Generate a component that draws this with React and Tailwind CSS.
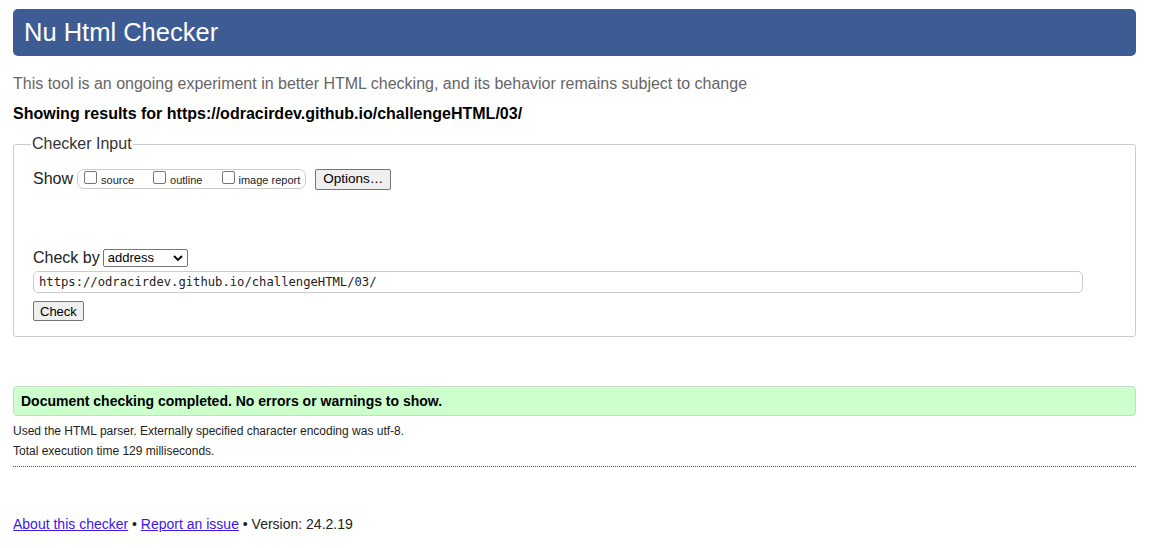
export default function App() {
  const sans = { fontFamily: '"Liberation Sans", Arial, sans-serif' };
  return (
    <div className="min-h-[548px] bg-white text-[#222] pl-[13px] pr-[15px] pt-[9px]" style={sans}>
      {/* header bar */}
      <div className="h-[47px] rounded-[5px] bg-[#3e5c94] flex items-center pl-[11px]">
        <h1 className="text-[25.5px] text-white leading-none">Nu Html Checker</h1>
      </div>

      <p className="mt-[18px] text-[16px] text-[#666] leading-[20px]">
        This tool is an ongoing experiment in better HTML checking, and its behavior remains subject to change
      </p>
      <p className="mt-[10px] text-[16px] font-bold text-black leading-[20px]">
        Showing results for https://odracirdev.github.io/challengeHTML/03/
      </p>

      {/* checker input */}
      <fieldset className="mt-[11px] border border-[#ccc] rounded-[3px] px-[19px] pb-[12px] h-[202px]">
        <legend className="px-[1px] ml-[-2px] text-[16px] text-[#333] leading-[18px]">Checker Input</legend>
        <div className="flex items-center mt-[14px] h-[24px]">
          <span className="text-[16px] text-[#222] mr-[4px]">Show</span>
          <div className="flex items-center h-[20px] border border-[#ccc] rounded-[7px] pl-[6px] pr-[5px] text-[11px] text-[#222]">
            <label className="flex items-center mr-[19px]">
              <span className="w-[13px] h-[13px] border border-[#767676] rounded-[2px] mr-[4px] mt-[-3px] bg-white" />
              <span className="mt-[2px]">source</span>
            </label>
            <label className="flex items-center mr-[20px]">
              <span className="w-[13px] h-[13px] border border-[#767676] rounded-[2px] mr-[4px] mt-[-3px] bg-white" />
              <span className="mt-[2px]">outline</span>
            </label>
            <label className="flex items-center">
              <span className="w-[13px] h-[13px] border border-[#767676] rounded-[2px] mr-[3px] mt-[-3px] bg-white" />
              <span className="mt-[2px]">image report</span>
            </label>
          </div>
          <button className="ml-[9px] h-[21px] px-[7px] border border-[#767676] rounded-[2px] bg-[#efefef] text-[13.5px] text-black leading-none">
            Options…
          </button>
        </div>

        <div className="flex items-center mt-[57px] h-[20px]">
          <span className="text-[16px] text-[#222] mr-[3px]">Check by</span>
          <div className="flex items-center justify-between w-[85px] h-[18px] border border-[#767676] rounded-[2px] pl-[4px] pr-[4px] text-[13px] text-black">
            <span>address</span>
            <svg width="10" height="7" viewBox="0 0 10 7">
              <path d="M1 1l4 4 4-4" fill="none" stroke="#000" strokeWidth="1.8" />
            </svg>
          </div>
        </div>

        <div className="mt-[3px] w-[1050px] h-[22px] border border-[#ccc] rounded-[5px] flex items-center pl-[5px]">
          <span className="text-[12.2px] text-[#222]" style={{ fontFamily: '"DejaVu Sans Mono", "Liberation Mono", monospace' }}>
            https://odracirdev.github.io/challengeHTML/03/
          </span>
        </div>

        <button className="mt-[8px] h-[20px] px-[6px] border border-[#767676] rounded-[2px] bg-[#efefef] text-[13px] text-black leading-none">
          Check
        </button>
      </fieldset>

      {/* result */}
      <div className="mt-[49px] h-[30px] border border-[#c4dec4] rounded-[4px] bg-[#ccffcc] flex items-center pl-[7px]">
        <p className="text-[14px] font-bold text-black">Document checking completed. No errors or warnings to show.</p>
      </div>
      <p className="mt-[7px] text-[12px] text-[#222] leading-[16px]">
        Used the HTML parser. Externally specified character encoding was utf-8.
      </p>
      <p className="mt-[4px] text-[12px] text-[#222] leading-[16px]">Total execution time 129 milliseconds.</p>
      <div className="mt-[7px] border-t border-dotted border-[#555]" />

      <p className="mt-[48px] text-[14px] text-[#222] leading-[18px]">
        <a href="#" className="text-[#3d16e8] underline">About this checker</a>
        {" • "}
        <a href="#" className="text-[#3d16e8] underline">Report an issue</a>
        {" • Version: 24.2.19"}
      </p>
    </div>
  );
}
